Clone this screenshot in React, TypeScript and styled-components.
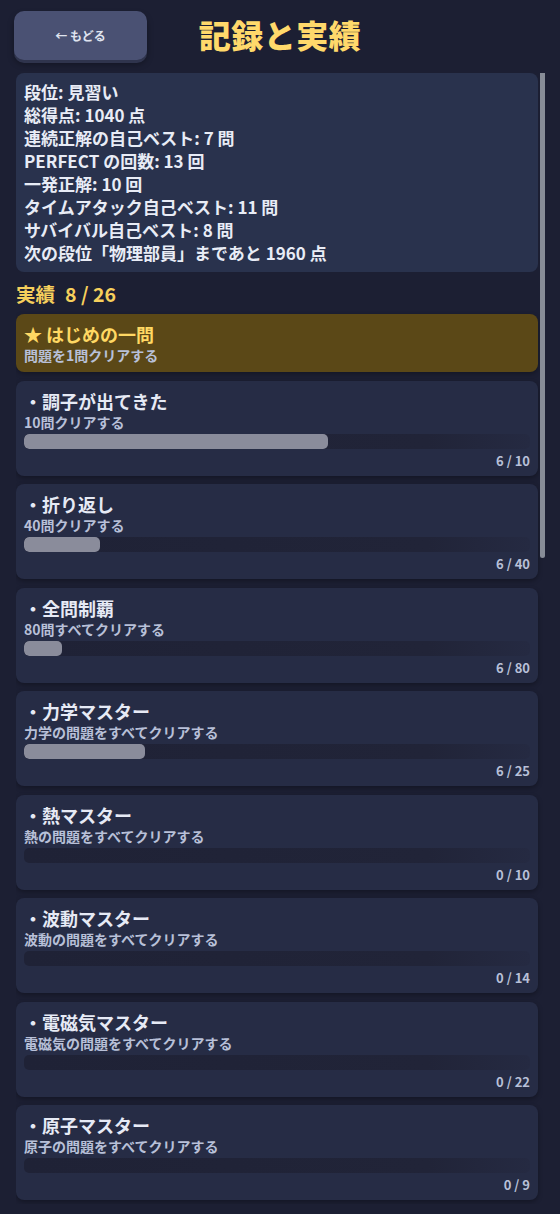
import React, { useEffect, useRef, useState } from 'react';
import styled, { createGlobalStyle } from 'styled-components';

const GlobalStyle = createGlobalStyle`
  html, body {
    margin: 0;
    padding: 0;
    background: #1c1f33;
  }
  body {
    font-family: "Noto Sans CJK JP", "Noto Sans", sans-serif;
    color: #e6eaf4;
  }
`;

const Page = styled.div`
  height: 100vh;
  display: flex;
  flex-direction: column;
  background: #1c1f33;
  overflow: hidden;
  padding-bottom: 10px;
  box-sizing: border-box;
`;

const Header = styled.header`
  position: relative;
  height: 73px;
  flex: none;
  display: flex;
  align-items: flex-start;
  padding: 11px 14px 0;
  box-sizing: border-box;
`;

const BackButton = styled.button`
  width: 133px;
  height: 49px;
  border: none;
  border-radius: 10px;
  background: #4a5173;
  box-shadow: 0 3px 0 #2f344d, 0 4px 6px rgba(0, 0, 0, 0.35);
  color: #dfe3ef;
  font-family: inherit;
  font-size: 12px;
  font-weight: 700;
  cursor: pointer;
`;

const Title = styled.h1`
  position: absolute;
  left: 0;
  right: 0;
  top: 12px;
  margin: 0;
  text-align: center;
  pointer-events: none;
  font-size: 32px;
  line-height: 44px;
  font-weight: 900;
  color: #ffd96b;
  letter-spacing: 0.5px;
`;

const ScrollArea = styled.div`
  position: relative;
  flex: 1;
  min-height: 0;
  margin: 0 14px 0 16px;
`;

const Scroller = styled.div`
  height: 100%;
  overflow-y: auto;
  padding-right: 8px;
  box-sizing: border-box;
  scrollbar-width: none;

  &::-webkit-scrollbar {
    display: none;
  }
`;

const Thumb = styled.div`
  position: absolute;
  top: 0;
  right: 1px;
  width: 5px;
  background: #878c97;
  border-radius: 0 0 3px 3px;
`;

const StatsBox = styled.section`
  background: #29324d;
  border-radius: 8px;
  padding: 7px 8px 8px;
  font-size: 17px;
  line-height: 23px;
  font-weight: 700;
  color: #e8ecf6;
`;

const StatLine = styled.div``;

const SectionHead = styled.h2`
  margin: 9px 0 7px;
  font-size: 19.5px;
  line-height: 26px;
  font-weight: 700;
  color: #f6cf5c;
  display: flex;
  gap: 10px;
`;

const List = styled.div`
  display: flex;
  flex-direction: column;
  gap: 8.5px;
  padding-bottom: 12px;
`;

const Card = styled.div<{ $done: boolean }>`
  background: ${(p) => (p.$done ? '#5b4817' : '#262c45')};
  border-radius: 8px;
  padding: 8px 8px ${(p) => (p.$done ? '8px' : '7px')};
  box-shadow: 0 2px 5px rgba(0, 0, 0, 0.3);
`;

const CardTitle = styled.div<{ $done: boolean }>`
  font-size: 18px;
  line-height: 24px;
  font-weight: 700;
  color: ${(p) => (p.$done ? '#ffd863' : '#e6eaf5')};
`;

const CardDesc = styled.div`
  font-size: 14px;
  line-height: 18px;
  font-weight: 700;
  color: #b8c0d8;
`;

const Track = styled.div`
  margin-top: 3px;
  height: 15px;
  border-radius: 5px;
  background: linear-gradient(90deg, #1f2236 0%, #212438 80%, #252a42 100%);
  overflow: hidden;
`;

const Fill = styled.div`
  height: 100%;
  border-radius: 5px;
  background: #8a8c9b;
`;

const Count = styled.div`
  margin-top: 3px;
  text-align: right;
  font-size: 13px;
  line-height: 17px;
  font-weight: 700;
  color: #b8c0d8;
`;

type Achievement = {
  name: string;
  desc: string;
  cur: number;
  max: number;
};

const achievements: Achievement[] = [
  { name: 'はじめの一問', desc: '問題を1問クリアする', cur: 1, max: 1 },
  { name: '調子が出てきた', desc: '10問クリアする', cur: 6, max: 10 },
  { name: '折り返し', desc: '40問クリアする', cur: 6, max: 40 },
  { name: '全問制覇', desc: '80問すべてクリアする', cur: 6, max: 80 },
  { name: '力学マスター', desc: '力学の問題をすべてクリアする', cur: 6, max: 25 },
  { name: '熱マスター', desc: '熱の問題をすべてクリアする', cur: 0, max: 10 },
  { name: '波動マスター', desc: '波動の問題をすべてクリアする', cur: 0, max: 14 },
  { name: '電磁気マスター', desc: '電磁気の問題をすべてクリアする', cur: 0, max: 22 },
  { name: '原子マスター', desc: '原子の問題をすべてクリアする', cur: 0, max: 9 },
  { name: '連続正解', desc: '5問連続で正解する', cur: 5, max: 5 },
  { name: '連続の達人', desc: '10問連続で正解する', cur: 7, max: 10 },
  { name: 'PERFECT!', desc: 'PERFECT を1回とる', cur: 1, max: 1 },
  { name: 'PERFECT 常連', desc: 'PERFECT を10回とる', cur: 10, max: 10 },
  { name: 'PERFECT 王', desc: 'PERFECT を30回とる', cur: 13, max: 30 },
  { name: '一発正解', desc: '一発正解を1回する', cur: 1, max: 1 },
  { name: '一発屋', desc: '一発正解を10回する', cur: 10, max: 10 },
  { name: '百発百中', desc: '一発正解を50回する', cur: 10, max: 50 },
  { name: 'タイムアタック入門', desc: 'タイムアタックで5問正解する', cur: 5, max: 5 },
  { name: 'スピードスター', desc: 'タイムアタックで15問正解する', cur: 11, max: 15 },
  { name: '生き残り', desc: 'サバイバルで8問正解する', cur: 8, max: 8 },
  { name: '不屈の物理', desc: 'サバイバルで20問正解する', cur: 8, max: 20 },
  { name: '物理部員', desc: '段位「物理部員」になる', cur: 1040, max: 3000 },
  { name: '物理部長', desc: '段位「物理部長」になる', cur: 1040, max: 6000 },
  { name: '研究者', desc: '段位「研究者」になる', cur: 1040, max: 10000 },
  { name: '毎日コツコツ', desc: '7日連続で遊ぶ', cur: 3, max: 7 },
  { name: '物理の申し子', desc: 'すべての実績を解除する', cur: 8, max: 25 },
];

const stats = [
  '段位: 見習い',
  '総得点: 1040 点',
  '連続正解の自己ベスト: 7 問',
  'PERFECT の回数: 13 回',
  '一発正解: 10 回',
  'タイムアタック自己ベスト: 11 問',
  'サバイバル自己ベスト: 8 問',
  '次の段位「物理部員」まであと 1960 点',
];

const AchievementCard: React.FC<{ a: Achievement }> = ({ a }) => {
  const done = a.cur >= a.max;
  return (
    <Card $done={done}>
      <CardTitle $done={done}>
        {done ? '★ ' : '・'}
        {a.name}
      </CardTitle>
      <CardDesc>{a.desc}</CardDesc>
      {!done && (
        <>
          <Track>
            <Fill style={{ width: `${(a.cur / a.max) * 100}%` }} />
          </Track>
          <Count>
            {a.cur} / {a.max}
          </Count>
        </>
      )}
    </Card>
  );
};

const App: React.FC = () => {
  const doneCount = achievements.filter((a) => a.cur >= a.max).length;
  const scrollRef = useRef<HTMLDivElement>(null);
  const [thumb, setThumb] = useState({ top: 0, height: 0 });

  const updateThumb = () => {
    const el = scrollRef.current;
    if (!el) return;
    const ratio = el.clientHeight / el.scrollHeight;
    setThumb({
      top: el.scrollTop * ratio,
      height: ratio < 1 ? el.clientHeight * ratio : 0,
    });
  };

  useEffect(() => {
    updateThumb();
    window.addEventListener('resize', updateThumb);
    return () => window.removeEventListener('resize', updateThumb);
  }, []);

  return (
    <Page>
      <GlobalStyle />
      <Header>
        <BackButton>← もどる</BackButton>
        <Title>記録と実績</Title>
      </Header>
      <ScrollArea>
        <Scroller ref={scrollRef} onScroll={updateThumb}>
          <StatsBox>
            {stats.map((s) => (
              <StatLine key={s}>{s}</StatLine>
            ))}
          </StatsBox>
          <SectionHead>
            <span>実績</span>
            <span>
              {doneCount} / {achievements.length}
            </span>
          </SectionHead>
          <List>
            {achievements.map((a) => (
              <AchievementCard key={a.name} a={a} />
            ))}
          </List>
        </Scroller>
        {thumb.height > 0 && (
          <Thumb style={{ top: thumb.top, height: thumb.height }} />
        )}
      </ScrollArea>
    </Page>
  );
};

export default App;
